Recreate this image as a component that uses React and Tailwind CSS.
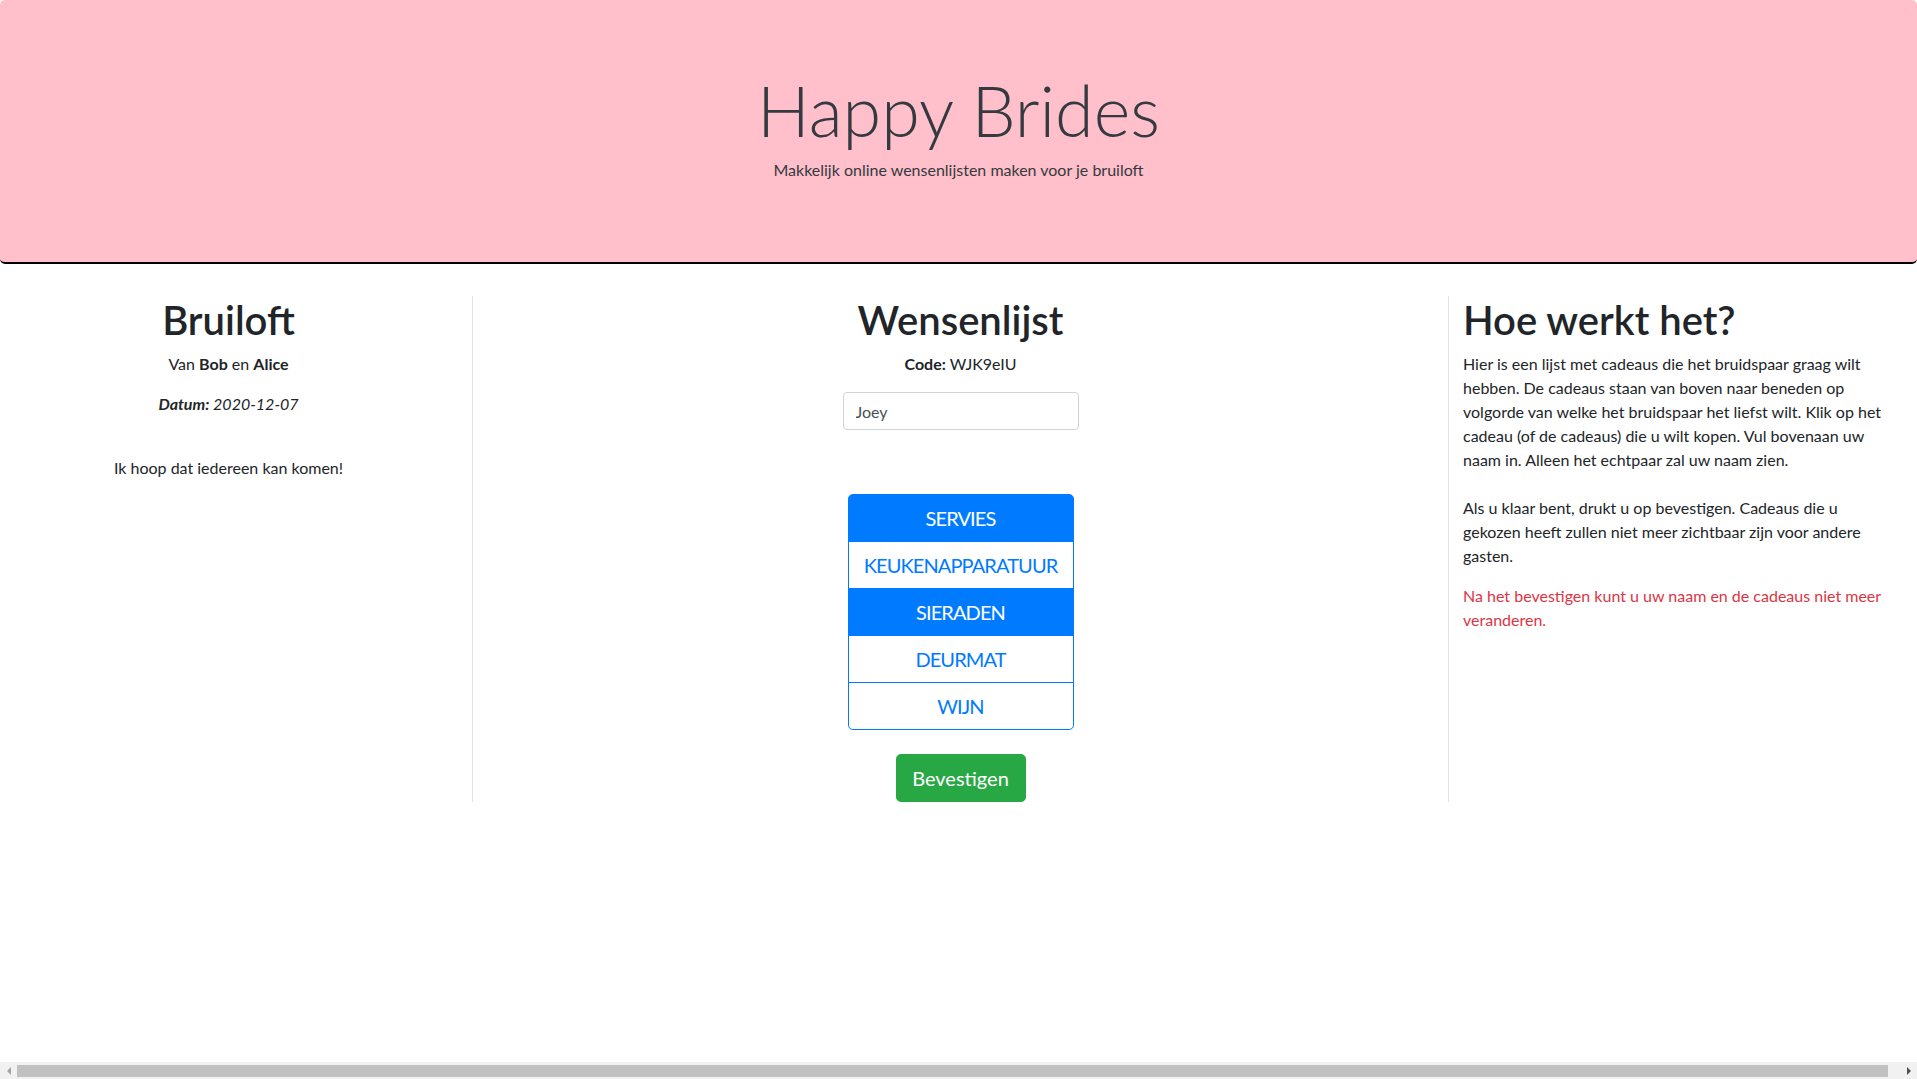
import React from "react";

const font = { fontFamily: "Lato, 'Noto Sans', sans-serif" };

function Header() {
  return (
    <div className="w-full bg-[#ffc0cb] rounded-[5px] border-b-2 border-black pt-[67px] pb-[64px] mb-[32px] text-center text-[#343a40]">
      <h1 className="text-[70px] leading-[86.4px] font-light mb-[5px]">Happy Brides</h1>
      <p className="text-[16px] leading-[24px] mb-[16px]">Makkelijk online wensenlijsten maken voor je bruiloft</p>
    </div>
  );
}

const gifts = [
  { name: "SERVIES", active: true },
  { name: "KEUKENAPPARATUUR", active: false },
  { name: "SIERADEN", active: true },
  { name: "DEURMAT", active: false },
  { name: "WIJN", active: false },
];

function GiftList() {
  return (
    <div className="w-[226px] mx-auto mt-[64px] flex flex-col">
      {gifts.map((g, i) => (
        <button
          key={g.name}
          className={
            "h-[48px] px-[8px] text-[20px] leading-[30px] tracking-[-0.9px] whitespace-nowrap border border-[#007bff] " +
            (i > 0 ? "-mt-px " : "") +
            (i === 0 ? "rounded-t-[4.8px] " : "") +
            (i === gifts.length - 1 ? "rounded-b-[4.8px] " : "") +
            (g.active ? "bg-[#007bff] text-white" : "bg-white text-[#007bff]")
          }
        >
          {g.name}
        </button>
      ))}
    </div>
  );
}

function ScrollBar() {
  return (
    <div className="h-[17px] shrink-0 bg-[#f1f1f1] flex items-center">
      <div className="w-[17px] h-full flex items-center justify-center">
        <div className="w-0 h-0 border-y-[4px] border-y-transparent border-r-[4px] border-r-[#a3a3a3]" />
      </div>
      <div className="w-[1871px] h-[12px] bg-[#c1c1c1]" />
      <div className="flex-1" />
      <div className="w-[17px] h-full flex items-center justify-center">
        <div className="w-0 h-0 border-y-[4px] border-y-transparent border-l-[4px] border-l-[#505050]" />
      </div>
    </div>
  );
}

export default function App() {
  return (
    <div style={font} className="h-screen flex flex-col overflow-hidden text-[#212529] text-[16px] leading-[24px] bg-white">
      <div className="flex-1 min-h-0 overflow-hidden">
        <Header />
        <div className="flex items-start w-[1935px]">
          <div className="w-[472px] shrink-0 pr-[15px] text-center">
            <h1 className="text-[40px] leading-[48px] font-semibold mb-[8px]">Bruiloft</h1>
            <p className="mb-[16px]">
              Van <b className="font-bold">Bob</b> en <b className="font-bold">Alice</b>
            </p>
            <p className="mb-[40px] italic">
              <b className="font-bold">Datum:</b> 2020-12-07
            </p>
            <p>Ik hoop dat iedereen kan komen!</p>
          </div>
          <div className="w-[977px] shrink-0 border-x border-[#dee2e6] px-[15px] text-center flex flex-col">
            <h1 className="text-[40px] leading-[48px] font-semibold mb-[8px]">Wensenlijst</h1>
            <p className="mb-[16px]">
              <b className="font-bold">Code:</b> WJK9eIU
            </p>
            <input
              readOnly
              defaultValue="Joey"
              className="block mx-auto w-[236px] h-[38px] border border-[#ced4da] rounded-[4px] px-[12px] text-[16px] text-[#495057] outline-none"
            />
            <GiftList />
            <button className="mx-auto mt-[24px] w-[130px] h-[48px] rounded-[4.8px] bg-[#28a745] border border-[#28a745] text-white text-[20px] leading-[30px]">
              Bevestigen
            </button>
          </div>
          <div className="w-[486px] shrink-0 pl-[14px] pr-[15px]">
            <h1 className="text-[40px] leading-[48px] font-semibold mb-[8px]">Hoe werkt het?</h1>
            <p className="mb-[16px] whitespace-nowrap">
              Hier is een lijst met cadeaus die het bruidspaar graag wilt
              <br />
              hebben. De cadeaus staan van boven naar beneden op
              <br />
              volgorde van welke het bruidspaar het liefst wilt. Klik op het
              <br />
              cadeau (of de cadeaus) die u wilt kopen. Vul bovenaan uw
              <br />
              naam in. Alleen het echtpaar zal uw naam zien.
              <br />
              <br />
              Als u klaar bent, drukt u op bevestigen. Cadeaus die u
              <br />
              gekozen heeft zullen niet meer zichtbaar zijn voor andere
              <br />
              gasten.
            </p>
            <p className="text-[#dc3545] whitespace-nowrap">
              Na het bevestigen kunt u uw naam en de cadeaus niet meer
              <br />
              veranderen.
            </p>
          </div>
        </div>
      </div>
      <ScrollBar />
    </div>
  );
}
